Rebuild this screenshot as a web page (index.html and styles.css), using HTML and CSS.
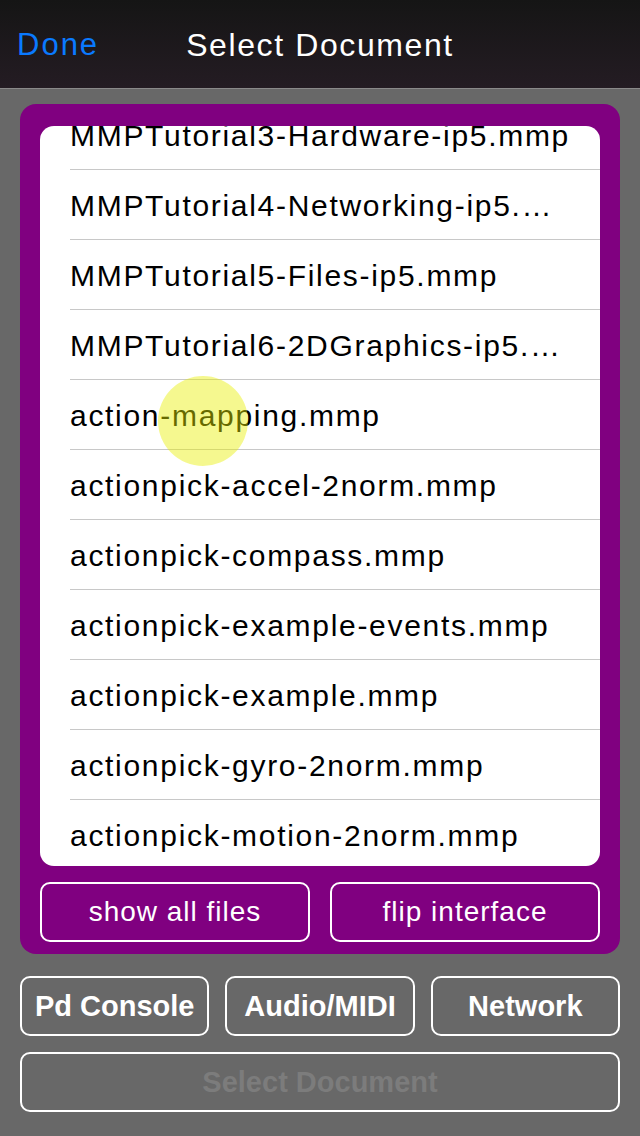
FILE: index.html
```html
<!DOCTYPE html>
<html>
<head>
<meta charset="utf-8">
<link rel="stylesheet" href="styles.css">
</head>
<body>
<div class="nav">
  <span class="done">Done</span>
  <span class="title">Select Document</span>
</div>
<div class="main">
  <div class="panel">
    <div class="list">
      <div class="rows">
        <div class="row">MMPTutorial3-Hardware-ip5.mmp</div>
        <div class="row">MMPTutorial4-Networking-ip5.…</div>
        <div class="row">MMPTutorial5-Files-ip5.mmp</div>
        <div class="row">MMPTutorial6-2DGraphics-ip5.…</div>
        <div class="row">action-mapping.mmp</div>
        <div class="row">actionpick-accel-2norm.mmp</div>
        <div class="row">actionpick-compass.mmp</div>
        <div class="row">actionpick-example-events.mmp</div>
        <div class="row">actionpick-example.mmp</div>
        <div class="row">actionpick-gyro-2norm.mmp</div>
        <div class="row">actionpick-motion-2norm.mmp</div>
      </div>
      <div class="touch"></div>
    </div>
    <div class="panel-buttons">
      <div class="pbtn">show all files</div>
      <div class="pbtn">flip interface</div>
    </div>
  </div>
  <div class="tabs">
    <div class="btn">Pd Console</div>
    <div class="btn">Audio/MIDI</div>
    <div class="btn">Network</div>
  </div>
  <div class="btn wide disabled">Select Document</div>
</div>
</body>
</html>
```
FILE: styles.css
```css
* { box-sizing: border-box; }
html, body { margin: 0; padding: 0; }
body {
  width: 640px;
  height: 1136px;
  background: #686868;
  font-family: "Liberation Sans", Arial, sans-serif;
  overflow: hidden;
}
.nav {
  height: 89px;
  background: linear-gradient(#151515, #241c23);
  border-bottom: 1px solid #8a8a8a;
  position: relative;
}
.done {
  position: absolute;
  left: 17px;
  top: 27px;
  color: #0a7aff;
  font-size: 31px;
  letter-spacing: 2px;
}
.title {
  color: #fff;
  font-size: 32px;
  letter-spacing: 1.6px;
  position: absolute;
  left: 0;
  right: 0;
  text-align: center;
  top: 27px;
}
.main {
  padding: 15px 20px 0;
  display: flex;
  flex-direction: column;
}
.panel {
  background: #800080;
  border-radius: 16px;
  padding: 22px 20px 12px;
  height: 850px;
  flex: none;
}
.list {
  background: #fff;
  border-radius: 14px;
  height: 740px;
  overflow: hidden;
  position: relative;
}
.rows {
  margin-top: -26px;
  padding-left: 30px;
}
.row {
  height: 70px;
  line-height: 70px;
  padding-top: 1px;
  font-size: 30px;
  letter-spacing: 1.7px;
  color: #000;
  border-bottom: 1px solid #c8c8c8;
  white-space: nowrap;
}
.touch {
  position: absolute;
  left: 118px;
  top: 250px;
  width: 90px;
  height: 90px;
  border-radius: 50%;
  background: rgba(232, 240, 0, 0.44);
}
.panel-buttons {
  display: flex;
  gap: 20px;
  margin-top: 16px;
}
.pbtn {
  flex: 1;
  height: 60px;
  border: 2px solid #fff;
  border-radius: 10px;
  color: #fff;
  font-size: 28px;
  letter-spacing: 1px;
  display: flex;
  align-items: center;
  justify-content: center;
}
.tabs {
  display: flex;
  gap: 16px;
  margin-top: 22px;
  flex: none;
}
.btn {
  flex: 1;
  height: 60px;
  border: 2px solid #fff;
  border-radius: 10px;
  color: #fff;
  font-size: 29px;
  font-weight: bold;
  display: flex;
  align-items: center;
  justify-content: center;
}
.btn.wide {
  flex: none;
  margin-top: 16px;
}
.btn.disabled {
  color: #7c7c7c;
}
```
